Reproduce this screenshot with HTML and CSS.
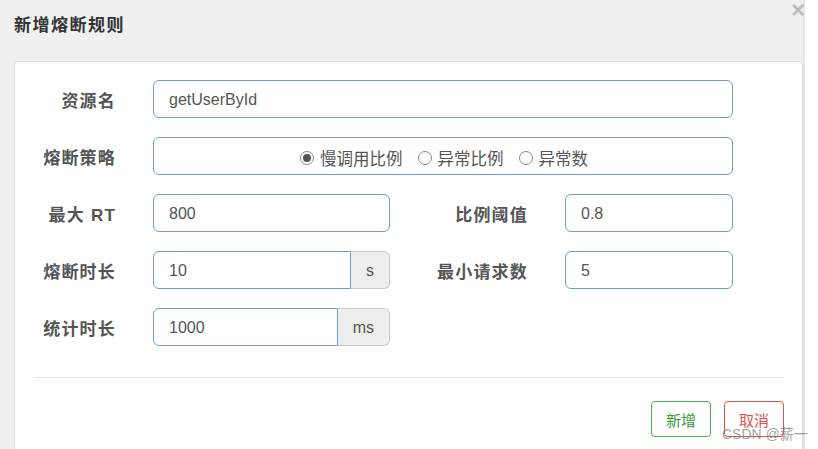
FILE: index.html
```html
<!DOCTYPE html>
<html lang="zh">
<head>
<meta charset="utf-8">
<title>新增熔断规则</title>
<link rel="stylesheet" href="styles.css">
</head>
<body>
<div class="page">
<div class="dialog">
  <div class="header"><h3 class="title">新增熔断规则</h3></div>
  <div class="panel">
    <div class="form">
      <label class="label">资源名</label>
      <div class="field span3"><input class="input" value="getUserById"></div>

      <label class="label">熔断策略</label>
      <div class="field span3">
        <div class="radio-box">
          <span class="radio-item"><span class="radio checked"></span>慢调用比例</span>
          <span class="radio-item"><span class="radio"></span>异常比例</span>
          <span class="radio-item"><span class="radio"></span>异常数</span>
        </div>
      </div>

      <label class="label">最大 RT</label>
      <div class="field"><input class="input" value="800"></div>
      <label class="label">比例阈值</label>
      <div class="field"><input class="input" value="0.8"></div>

      <label class="label">熔断时长</label>
      <div class="field"><div class="group"><input class="input in-group" value="10"><span class="addon">s</span></div></div>
      <label class="label">最小请求数</label>
      <div class="field"><input class="input" value="5"></div>

      <label class="label">统计时长</label>
      <div class="field"><div class="group"><input class="input in-group" value="1000"><span class="addon">ms</span></div></div>
    </div>
    <div class="divider"></div>
    <div class="actions">
      <button class="btn btn-ok">新增</button>
      <button class="btn btn-cancel">取消</button>
    </div>
  </div>
</div>
<span class="close">×</span>
<span class="watermark">CSDN @薪一</span>
</div>
</body>
</html>
```
FILE: styles.css
```css
* { box-sizing: border-box; }
body {
  margin: 0;
  background: #fff;
  font-family: "Liberation Sans", "Noto Sans CJK SC", sans-serif;
}
.page {
  position: relative;
  width: 818px;
  height: 449px;
  overflow: hidden;
}
.dialog {
  position: relative;
  width: 805px;
  height: 449px;
  background: #f0f0f0;
  border-right: 2px solid #e4e4e4;
  overflow: hidden;
}
.header {
  height: 61px;
  padding: 14px 14px 0;
}
.title {
  margin: 0;
  font-size: 17px;
  line-height: 20px;
  font-weight: bold;
  color: #333;
  letter-spacing: 1.5px;
  font-family: "Noto Sans CJK SC", sans-serif;
}
.close {
  position: absolute;
  left: 791px;
  top: 2px;
  font-size: 24px;
  font-weight: bold;
  color: #bbb;
  line-height: 16px;
  font-family: "Liberation Sans", sans-serif;
}
.panel {
  margin-left: 14px;
  width: 789px;
  height: 420px;
  background: #fff;
  border: 1px solid #ddd;
  border-radius: 4px;
  padding-top: 18px;
}
.form {
  display: grid;
  grid-template-columns: 138px 237px 175px 168px;
  row-gap: 19px;
}
.label {
  text-align: right;
  padding-right: 37px;
  padding-top: 3px;
  line-height: 38px;
  height: 38px;
  font-size: 17px;
  font-weight: bold;
  color: #555;
  letter-spacing: 1.2px;
  font-family: "Liberation Sans", "Noto Sans CJK SC", sans-serif;
}
.span3 { grid-column: 2 / 5; }
.input {
  display: block;
  width: 100%;
  height: 38px;
  border: 1px solid #6b9fd4;
  border-radius: 6px;
  padding: 2px 15px 0;
  font-family: "Liberation Sans", sans-serif;
  font-size: 16px;
  color: #555;
  background: #fff;
  outline: none;
}
.group { display: flex; }
.in-group {
  flex: 1;
  min-width: 0;
  border-radius: 6px 0 0 6px;
}
.addon {
  height: 38px;
  line-height: 38px;
  padding: 0 15px;
  background: #eee;
  border: 1px solid #ccc;
  border-left: 0;
  border-radius: 0 6px 6px 0;
  font-size: 16px;
  color: #555;
}
.radio-box {
  height: 38px;
  border: 1px solid #6b9fd4;
  border-radius: 6px;
  display: flex;
  justify-content: center;
  align-items: center;
  padding-top: 3px;
  padding-left: 2px;
  gap: 15px;
  font-size: 16.5px;
  color: #555;
  font-family: "Noto Sans CJK SC", sans-serif;
}
.radio-item {
  display: flex;
  align-items: center;
  gap: 6px;
}
.radio {
  width: 14px;
  height: 14px;
  border: 1px solid #888;
  border-radius: 50%;
  background: #fff;
  position: relative;
}
.radio.checked::after {
  content: "";
  position: absolute;
  left: 2px;
  top: 2px;
  width: 8px;
  height: 8px;
  border-radius: 50%;
  background: #555;
}
.divider {
  margin: 31px 19px 0;
  border-top: 1px solid #e5e5e5;
}
.actions {
  display: flex;
  justify-content: flex-end;
  gap: 13px;
  padding: 23px 18px 0 0;
}
.btn {
  width: 60px;
  height: 36px;
  background: #fff;
  border-radius: 4px;
  font-size: 15px;
  font-family: "Noto Sans CJK SC", sans-serif;
  cursor: pointer;
}
.btn-ok { border: 1px solid #4cae4c; color: #3a9a3a; }
.btn-cancel { border: 1px solid #d9534f; color: #d9534f; }
.watermark {
  position: absolute;
  left: 722px;
  top: 423px;
  font-size: 14px;
  color: rgba(120, 120, 120, 0.7);
  font-family: "Liberation Sans", "Noto Sans CJK SC", sans-serif;
  white-space: nowrap;
}
```
